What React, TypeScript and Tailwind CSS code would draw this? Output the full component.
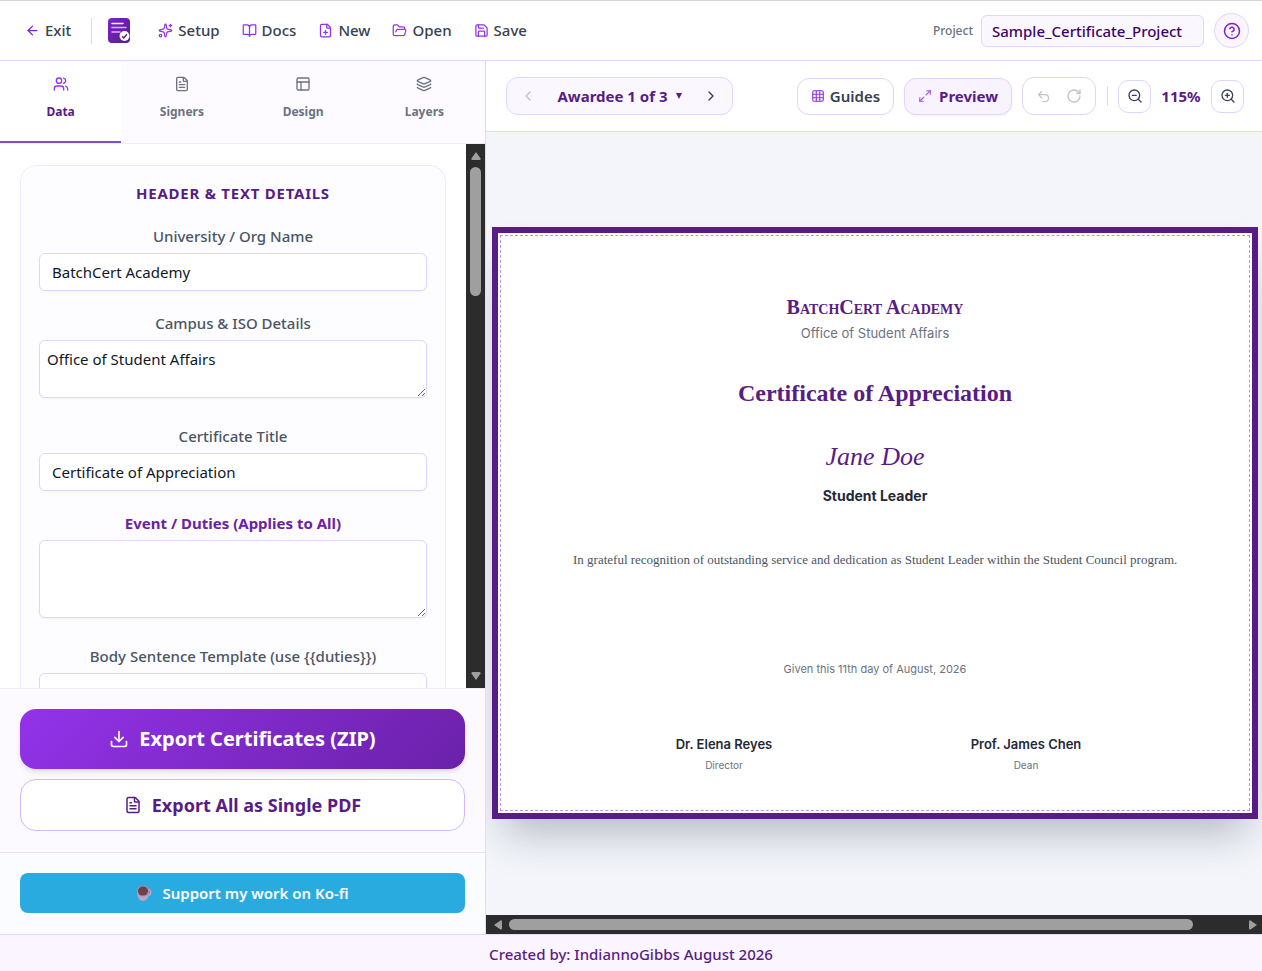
import {
  ArrowLeft,
  BookOpen,
  ChevronLeft,
  ChevronRight,
  CircleHelp,
  Download,
  FilePlus,
  FileText,
  FolderOpen,
  Grid3x3,
  Layers,
  Maximize2,
  PanelsTopLeft,
  RotateCw,
  Save,
  Sparkles,
  Undo2,
  Users,
  ZoomIn,
  ZoomOut
} from 'lucide-react'
import React, { useState } from 'react'

const menuItems = [
  { label: 'Setup', icon: Sparkles },
  { label: 'Docs', icon: BookOpen },
  { label: 'New', icon: FilePlus },
  { label: 'Open', icon: FolderOpen },
  { label: 'Save', icon: Save }
]

const tabs = [
  { id: 'data', label: 'Data', icon: Users },
  { id: 'signers', label: 'Signers', icon: FileText },
  { id: 'design', label: 'Design', icon: PanelsTopLeft },
  { id: 'layers', label: 'Layers', icon: Layers }
]

const signers = [
  { name: 'Dr. Elena Reyes', role: 'Director' },
  { name: 'Prof. James Chen', role: 'Dean' }
]

const Logo = () => (
  <svg width="22" height="25" viewBox="0 0 22 25" aria-hidden="true">
    <defs>
      <linearGradient id="logo" x1="0" y1="0" x2="1" y2="1">
        <stop offset="0" stopColor="#7e22ce" />
        <stop offset="1" stopColor="#581c87" />
      </linearGradient>
    </defs>
    <rect width="22" height="25" rx="4" fill="url(#logo)" />
    <path d="M4 5.500h11" stroke="#fff" strokeWidth="1.500" strokeLinecap="round" />
    <path d="M4 9.500h14M4 14h8" stroke="#d8b4fe" strokeWidth="1.500" strokeLinecap="round" />
    <circle cx="16.500" cy="18" r="5" fill="#fff" />
    <path d="m14.200 18.200 1.700 1.700 3-3.600" fill="none" stroke="#581c87" strokeWidth="1.400" />
  </svg>
)

const CoffeeCup = () => (
  <svg width="16" height="18" viewBox="0 0 16 18" aria-hidden="true">
    <path d="M12 6c3-1 4 2 1 6" fill="none" stroke="#b9a5c8" strokeWidth="1.500" />
    <path d="M1 7c0 6 2 10 6 10s6-4 6-10z" fill="#b9a5c8" />
    <ellipse cx="7" cy="7" rx="6.300" ry="5.600" fill="#a48fb0" />
    <ellipse cx="7" cy="7" rx="5" ry="4.600" fill="#6d4145" />
  </svg>
)

interface FieldProps {
  id: string
  label: string
  value?: string
  rows?: 'short' | 'tall'
  highlight?: boolean
}

const Field: React.FC<FieldProps> = ({ id, label, value = '', rows, highlight }) => (
  <div className={rows ? 'mb-7' : 'mb-[22px]'}>
    <label
      htmlFor={id}
      className={`mb-[7px] block text-center text-[15px] leading-5 ${highlight ? 'font-bold text-[#6b21a8]' : 'font-medium text-[#4b5563]'}`}
    >
      {label}
    </label>
    {rows ? (
      <textarea
        id={id}
        defaultValue={value}
        className={`block w-full resize-y rounded-md border border-[#ddd6fe] bg-white px-[7px] py-2 text-[15px] leading-5 text-gray-900 shadow-xs ${rows === 'tall' ? 'h-[78px]' : 'h-[58px]'}`}
      />
    ) : (
      <input
        id={id}
        type="text"
        defaultValue={value}
        className="block h-[38px] w-full rounded-md border border-[#ddd6fe] bg-white px-3 text-[15px] text-gray-900 shadow-xs"
      />
    )}
  </div>
)

const Header = () => (
  <header className="flex h-[61px] shrink-0 items-center border-t border-b border-t-[#d4d4d8] border-b-[#ddd6fe] bg-white pr-[13px] pl-[25px]">
    <button type="button" className="flex items-center gap-[5px] text-[15px] font-medium text-[#374151]">
      <ArrowLeft size={15} className="text-[#7e22ce]" />
      Exit
    </button>
    <span className="mr-4 ml-5 h-[26px] w-px bg-[#ddd6fe]" />
    <Logo />
    <nav className="ml-7 flex items-center gap-[22px]">
      {menuItems.map(({ label, icon: Icon }) => (
        <button key={label} type="button" className="flex items-center gap-[5px] text-[15px] font-medium text-[#374151]">
          <Icon size={15} className="text-[#9333ea]" />
          {label}
        </button>
      ))}
    </nav>
    <div className="ml-auto flex items-center">
      <label htmlFor="project" className="mr-2 text-xs font-medium text-[#6b7280]">
        Project
      </label>
      <input
        id="project"
        type="text"
        defaultValue="Sample_Certificate_Project"
        className="h-8 w-[223px] rounded-md border border-[#ddd6fe] bg-[#faf7ff] px-[10px] text-[15px] font-medium text-[#3b0764]"
      />
      <button
        type="button"
        aria-label="Help"
        className="ml-[10px] flex size-[35px] items-center justify-center rounded-full border border-[#ddd6fe] bg-[#faf5ff] text-[#7e22ce]"
      >
        <CircleHelp size={18} />
      </button>
    </div>
  </header>
)

const Sidebar = () => {
  const [active, setActive] = useState('data')

  return (
    <aside className="flex w-[486px] shrink-0 flex-col border-r border-[#e9d5ff] bg-white">
      <div role="tablist" className="flex h-[83px] shrink-0 border-b border-[#ede9fe] bg-[#fdfbff]">
        {tabs.map(({ id, label, icon: Icon }) => (
          <button
            key={id}
            type="button"
            role="tab"
            aria-selected={active === id}
            onClick={() => setActive(id)}
            className={`flex flex-1 flex-col items-center gap-3 border-b-2 pt-[15px] text-xs font-bold ${active === id ? 'border-[#7e4fd0] bg-white text-[#581c87]' : 'border-transparent text-[#6b7280]'}`}
          >
            <Icon size={16} className={active === id ? 'text-[#9333ea]' : 'text-[#6b7280]'} />
            {label}
          </button>
        ))}
      </div>

      <div className="flex min-h-0 flex-1">
        <div className="min-w-0 flex-1 overflow-hidden px-5 pt-[21px]">
          <section className="rounded-2xl border border-[#f0eafe] bg-[#fdfcff] px-[18px] pt-[17px]">
            <h2 className="mb-[23px] text-center text-[15px] leading-5 font-bold tracking-wider text-[#581c87] uppercase">
              Header &amp; Text Details
            </h2>
            <Field id="org" label="University / Org Name" value="BatchCert Academy" />
            <Field id="campus" label="Campus & ISO Details" value="Office of Student Affairs" rows="short" />
            <Field id="title" label="Certificate Title" value="Certificate of Appreciation" />
            <Field id="duties" label="Event / Duties (Applies to All)" rows="tall" highlight />
            <Field id="body" label="Body Sentence Template (use {{duties}})" rows="tall" />
          </section>
        </div>
        <div className="flex w-[19px] shrink-0 flex-col items-center bg-[#2c2c2c] py-2">
          <svg width="10" height="8" viewBox="0 0 10 8" fill="#9f9f9f">
            <path d="M5 0 9.600 6.500Q9.800 8 8.500 8h-7Q.2 8 .4 6.500z" />
          </svg>
          <div className="mt-[7px] h-[129px] w-[11px] rounded-full bg-[#9f9f9f]" />
          <svg width="10" height="8" viewBox="0 0 10 8" fill="#9f9f9f" className="mt-auto">
            <path d="M5 8 .4 1.500Q.2 0 1.500 0h7Q9.800 0 9.600 1.500z" />
          </svg>
        </div>
      </div>

      <div className="flex shrink-0 flex-col gap-[10px] border-t border-[#ede9fe] bg-[#fdfaff] px-5 pt-5 pb-[21px]">
        <button
          type="button"
          className="flex h-[60px] items-center justify-center gap-[10px] rounded-2xl bg-linear-[135deg] from-[#9333ea] to-[#6b21a8] text-xl font-bold text-white shadow-md"
        >
          <Download size={20} />
          Export Certificates (ZIP)
        </button>
        <button
          type="button"
          className="flex h-[52px] items-center justify-center gap-[10px] rounded-2xl border border-[#d0b8fa] bg-white text-lg font-bold text-[#581c87]"
        >
          <FileText size={18} />
          Export All as Single PDF
        </button>
      </div>

      <div className="shrink-0 border-t border-[#e5e7eb] bg-[#fafcff] px-5 pt-5 pb-[21px]">
        <a
          href="#kofi"
          className="flex h-10 items-center justify-center gap-[10px] rounded-lg bg-[#29abe0] text-[15px] font-semibold text-white"
        >
          <CoffeeCup />
          Support my work on Ko-fi
        </a>
      </div>
    </aside>
  )
}

const Toolbar = () => (
  <div className="flex h-[71px] shrink-0 items-center border-b border-[#ddd6fe] bg-white pr-[18px] pl-5 shadow-xs">
    <div className="flex h-[38px] w-[227px] items-center justify-between rounded-xl border border-[#ddd6fe] bg-[#faf7ff] px-[13px]">
      <button type="button" aria-label="Previous awardee" className="text-[#c4c0cc]">
        <ChevronLeft size={16} />
      </button>
      <button type="button" className="flex items-center gap-2 text-[15px] font-bold text-[#581c87]">
        Awardee 1 of 3
        <svg width="6" height="6" viewBox="0 0 6 6" fill="currentColor">
          <path d="M0 0h6L3 6z" />
        </svg>
      </button>
      <button type="button" aria-label="Next awardee" className="text-[#374151]">
        <ChevronRight size={16} />
      </button>
    </div>

    <div className="ml-auto flex items-center">
      <button
        type="button"
        className="flex h-[37px] items-center gap-[5px] rounded-xl border border-[#ddd6fe] bg-white px-[13px] text-[15px] font-semibold text-[#374151]"
      >
        <Grid3x3 size={14} className="text-[#9333ea]" />
        Guides
      </button>
      <button
        type="button"
        className="ml-[10px] flex h-[37px] items-center gap-[7px] rounded-xl border border-[#ddd6fe] bg-[#f8f3ff] px-[13px] text-[15px] font-bold text-[#581c87] shadow-xs"
      >
        <Maximize2 size={14} className="text-[#a855f7]" />
        Preview
      </button>
      <div className="ml-[10px] flex h-[38px] w-[74px] items-center justify-center gap-[15px] rounded-xl border border-[#ddd6fe] text-[#c4c4c8]">
        <button type="button" aria-label="Undo">
          <Undo2 size={15} />
        </button>
        <button type="button" aria-label="Redo">
          <RotateCw size={16} />
        </button>
      </div>
      <span className="mr-[10px] ml-[11px] h-5 w-px bg-[#ddd6fe]" />
      <button
        type="button"
        aria-label="Zoom out"
        className="flex size-[33px] items-center justify-center rounded-[10px] border border-[#ddd6fe] text-[#374151]"
      >
        <ZoomOut size={16} />
      </button>
      <span className="w-[60px] text-center text-[15px] font-bold text-[#581c87]">115%</span>
      <button
        type="button"
        aria-label="Zoom in"
        className="flex size-[33px] items-center justify-center rounded-[10px] border border-[#ddd6fe] text-[#374151]"
      >
        <ZoomIn size={16} />
      </button>
    </div>
  </div>
)

const Certificate = () => (
  <article className="aspect-[22/17] w-full border-[6px] border-[#581c87] bg-white p-0.5 text-center font-['Inter',sans-serif] shadow-[0_25px_40px_-12px_rgba(30,41,59,0.3)]">
    <div className="h-full border border-dashed border-[#b794f4] px-[72px] pt-[59px]">
      <h1 className="font-['Liberation_Serif',serif] text-xl leading-6 font-bold text-[#581c87] [font-variant:small-caps]">
        BatchCert Academy
      </h1>
      <p className="mt-1 text-[13px] leading-5 text-[#6b7280]">Office of Student Affairs</p>
      <p className="mt-[34px] font-['Liberation_Serif',serif] text-2xl leading-8 font-bold text-[#581c87]">
        Certificate of Appreciation
      </p>
      <p className="mt-8 font-['Liberation_Serif',serif] text-[26px] leading-8 text-[#581c87] italic">Jane Doe</p>
      <p className="mt-[13px] text-sm leading-5 font-bold text-[#1f2937]">Student Leader</p>
      <p className="mt-11 font-['Liberation_Serif',serif] text-[13px] leading-5 whitespace-nowrap text-[#4b5563]">
        In grateful recognition of outstanding service and dedication as Student Leader within the Student Council program.
      </p>
      <p className="mt-[89px] text-[11px] leading-5 text-[#6b7280]">Given this 11th day of August, 2026</p>
      <div className="mt-[55px] grid grid-cols-2">
        {signers.map((signer) => (
          <div key={signer.name}>
            <p className="text-[13px] leading-5 font-semibold text-[#1f2937]">{signer.name}</p>
            <p className="text-[10px] leading-[22px] text-[#6b7280]">{signer.role}</p>
          </div>
        ))}
      </div>
    </div>
  </article>
)

export default function App() {
  return (
    <div className="flex h-screen flex-col bg-white font-['Noto_Sans',sans-serif]">
      <Header />
      <div className="flex min-h-0 flex-1">
        <Sidebar />
        <main className="flex min-w-0 flex-1 flex-col">
          <Toolbar />
          <div className="flex min-h-0 flex-1 items-center overflow-hidden bg-[#f3f5fa] pr-1 pb-px pl-1.5">
            <Certificate />
          </div>
          <div className="flex h-[19px] shrink-0 items-center bg-[#2c2c2c] pr-[5px] pl-2">
            <svg width="8" height="10" viewBox="0 0 8 10" fill="#9f9f9f">
              <path d="M0 5 6.500.4Q8 .2 8 1.500v7Q8 9.800 6.500 9.600z" />
            </svg>
            <div className="mr-14 ml-[7px] h-[11px] flex-1 rounded-full bg-[#9f9f9f]" />
            <svg width="8" height="10" viewBox="0 0 8 10" fill="#9f9f9f">
              <path d="M8 5 1.500.4Q0 .2 0 1.500v7Q0 9.800 1.500 9.600z" />
            </svg>
          </div>
        </main>
      </div>
      <footer className="flex h-[37px] shrink-0 items-center justify-center border-t border-[#e9d5ff] bg-[#faf5ff] pt-0.5 text-[15px] font-medium text-[#581c87]">
        Created by: IndiannoGibbs August 2026
      </footer>
    </div>
  )
}
